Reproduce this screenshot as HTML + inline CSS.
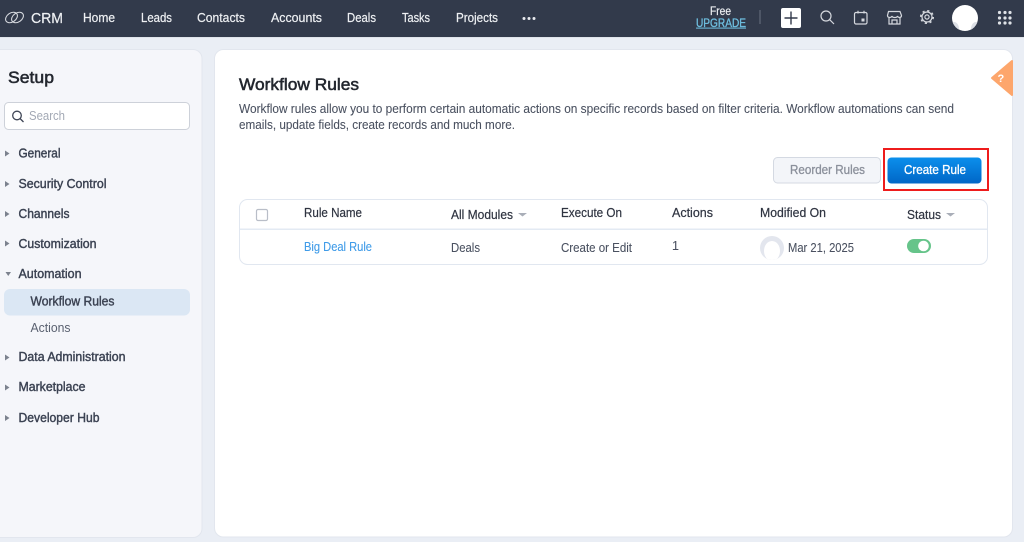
<!DOCTYPE html>
<html lang="en"><head><meta charset="utf-8"><title>Workflow Rules</title>
<style>
html,body{margin:0;padding:0;background:#eaeef5;width:1024px;height:542px;overflow:hidden}
svg{display:block;filter:blur(.3px)}
text{font-family:"Liberation Sans",sans-serif;font-size:12.5px;fill:#3f4656}
.n{fill:#eef0f3;stroke:#eef0f3;stroke-width:.2}
.s{fill:#3b4252;stroke:#3b4252;stroke-width:.4}
.h{fill:#2f3441;stroke:#2f3441;stroke-width:.2}
.d{fill:#4a5160;stroke:#4a5160;stroke-width:.08}
.i{fill:none;stroke:#d5d8de;stroke-width:1.2}
</style></head><body>
<svg width="1024" height="542" viewBox="0 0 1024 542" xmlns="http://www.w3.org/2000/svg">
<defs><linearGradient id="g" x1="0" y1="0" x2="0" y2="1"><stop offset="0" stop-color="#0b8fec"/><stop offset="1" stop-color="#0066c6"/></linearGradient>
<clipPath id="av"><circle cx="965" cy="18" r="13"/></clipPath>
<clipPath id="av2"><circle cx="772" cy="248" r="12"/></clipPath></defs>
<rect width="1024" height="542" fill="#eaeef5"/>
<rect width="1024" height="37" fill="#323a4b"/>
<rect y="37" width="1024" height="1" fill="#dfe3ea"/>

<!-- logo -->
<g fill="none" stroke="#d5d8de" stroke-width="1.1"><ellipse cx="11.500" cy="17.500" rx="6.500" ry="4.500" transform="rotate(-35 11.500 17.500)"/><ellipse cx="17.500" cy="17.500" rx="6.500" ry="4.500" transform="rotate(-35 17.500 17.500)"/></g>
<text x="31" y="23" style="font-size:14.500px" class="n" textLength="32" lengthAdjust="spacingAndGlyphs">CRM</text>
<text x="83" y="22" class="n" textLength="32" lengthAdjust="spacingAndGlyphs">Home</text>
<text x="141" y="22" class="n" textLength="31" lengthAdjust="spacingAndGlyphs">Leads</text>
<text x="197" y="22" class="n" textLength="48" lengthAdjust="spacingAndGlyphs">Contacts</text>
<text x="271" y="22" class="n" textLength="51" lengthAdjust="spacingAndGlyphs">Accounts</text>
<text x="347" y="22" class="n" textLength="29" lengthAdjust="spacingAndGlyphs">Deals</text>
<text x="402" y="22" class="n" textLength="28" lengthAdjust="spacingAndGlyphs">Tasks</text>
<text x="456" y="22" class="n" textLength="42" lengthAdjust="spacingAndGlyphs">Projects</text>
<g fill="#e9ebef"><circle cx="524" cy="18.500" r="1.500"/><circle cx="529" cy="18.500" r="1.500"/><circle cx="534" cy="18.500" r="1.500"/></g>

<!-- right header -->
<text x="710" y="15" style="font-size:11.500px" class="n" textLength="21" lengthAdjust="spacingAndGlyphs">Free</text>
<text x="696" y="27" style="font-size:12px;fill:#6fc0e2;stroke:#6fc0e2;stroke-width:.3" textLength="50" lengthAdjust="spacingAndGlyphs">UPGRADE</text>
<rect x="696" y="27.600" width="50" height="1" fill="#6fc0e2"/>
<rect x="759.500" y="10" width="1" height="14" fill="#6b7280"/>
<rect x="781" y="8" width="20" height="20" rx="2" fill="#fff"/>
<path d="M791 11.500V24.500M784.500 18H797.500" stroke="#323a4b" stroke-width="1.400" fill="none"/>
<circle cx="826" cy="16" r="5" class="i"/><path d="M829.700 19.700L834 24" class="i"/>
<rect x="854.500" y="12.500" width="12.500" height="11.500" rx="1.500" class="i"/><path d="M858 10.800V13.500M864 10.800V13.500" class="i"/><rect x="861.500" y="18.500" width="3" height="3" fill="#d5d8de"/>
<path d="M888.500 11.500H900L901.500 15.500C901.500 18 898 18 897.500 16C897 18 892.500 18 892 16C891.500 18 887.500 18 887.500 15.500ZM889 18V24H900V18M892 24V20H897V24" class="i"/>
<circle cx="927" cy="17" r="5" class="i"/><circle cx="927" cy="17" r="6.300" fill="none" stroke="#d5d8de" stroke-width="1.500" stroke-dasharray="2.200 2.750"/><circle cx="927" cy="17" r="2.100" class="i"/>
<circle cx="965" cy="18" r="13" fill="#fff"/>
<g clip-path="url(#av)" fill="#dde0e6"><ellipse cx="954" cy="29" rx="5" ry="7"/><ellipse cx="976" cy="29" rx="5" ry="7"/></g>
<g fill="#dfe2e7"><circle cx="999.500" cy="12.500" r="1.600"/><circle cx="1005" cy="12.500" r="1.600"/><circle cx="1010" cy="12.500" r="1.600"/><circle cx="999.500" cy="18" r="1.600"/><circle cx="1005" cy="18" r="1.600"/><circle cx="1010" cy="18" r="1.600"/><circle cx="999.500" cy="23" r="1.600"/><circle cx="1005" cy="23" r="1.600"/><circle cx="1010" cy="23" r="1.600"/></g>

<!-- sidebar -->
<rect x="-12" y="49.500" width="214" height="488" rx="9" fill="#f5f6fa" stroke="#e2e6ee"/>
<text x="8" y="83" style="font-size:17px;fill:#23272f;stroke:#23272f;stroke-width:.55" textLength="46" lengthAdjust="spacingAndGlyphs">Setup</text>
<rect x="4.500" y="102.500" width="185" height="27" rx="4" fill="#fff" stroke="#cdd1d9"/>
<circle cx="17" cy="115.500" r="4.300" fill="none" stroke="#3f4656" stroke-width="1.300"/><path d="M20 118.500L23.500 122" stroke="#3f4656" stroke-width="1.300"/>
<text x="29" y="120" style="fill:#a3a9b5" textLength="36" lengthAdjust="spacingAndGlyphs">Search</text>
<g fill="#7c828e">
<path d="M5 150.500L9.500 153.500L5 156.500Z"/><path d="M5 181L9.500 184L5 187Z"/><path d="M5 211L9.500 214L5 217Z"/><path d="M5 240.500L9.500 243.500L5 246.500Z"/>
<path d="M5.500 272H11L8.250 276Z"/><path d="M5 354.500L9.500 357.500L5 360.500Z"/><path d="M5 384.500L9.500 387.500L5 390.500Z"/><path d="M5 415L9.500 418L5 421Z"/>
</g>
<text x="18.500" y="157.500" class="s" textLength="42" lengthAdjust="spacingAndGlyphs">General</text>
<text x="18.500" y="188" class="s" textLength="88" lengthAdjust="spacingAndGlyphs">Security Control</text>
<text x="18.500" y="218" class="s" textLength="51" lengthAdjust="spacingAndGlyphs">Channels</text>
<text x="18.500" y="248" class="s" textLength="78" lengthAdjust="spacingAndGlyphs">Customization</text>
<text x="18.500" y="278" class="s" textLength="63" lengthAdjust="spacingAndGlyphs">Automation</text>
<rect x="4" y="289" width="186" height="26.500" rx="6" fill="#dbe7f4"/>
<text x="30.500" y="305.500" class="s" textLength="84" lengthAdjust="spacingAndGlyphs">Workflow Rules</text>
<text x="30.500" y="332" style="fill:#5a6170" textLength="40" lengthAdjust="spacingAndGlyphs">Actions</text>
<text x="18.500" y="361" class="s" textLength="107" lengthAdjust="spacingAndGlyphs">Data Administration</text>
<text x="18.500" y="391" class="s" textLength="67" lengthAdjust="spacingAndGlyphs">Marketplace</text>
<text x="18.500" y="422" class="s" textLength="81" lengthAdjust="spacingAndGlyphs">Developer Hub</text>

<!-- main -->
<rect x="214.500" y="49.500" width="798" height="487.500" rx="9" fill="#fff" stroke="#e2e6ee"/>
<path d="M1012 61L992 78L1012 95Z" fill="#fda66c" stroke="#fda66c" stroke-width="2" stroke-linejoin="round"/>
<text x="997.500" y="82" style="font-size:11px;fill:#fff;font-weight:bold">?</text>
<text x="239" y="90" style="font-size:17px;fill:#23272f;stroke:#23272f;stroke-width:.55" textLength="120" lengthAdjust="spacingAndGlyphs">Workflow Rules</text>
<text x="239" y="113" class="d" textLength="715" lengthAdjust="spacingAndGlyphs">Workflow rules allow you to perform certain automatic actions on specific records based on filter criteria. Workflow automations can send</text>
<text x="239" y="129" class="d" textLength="276" lengthAdjust="spacingAndGlyphs">emails, update fields, create records and much more.</text>

<rect x="773.500" y="157.500" width="107" height="25.500" rx="4" fill="#f3f5f9" stroke="#d4d9e2"/>
<text x="790" y="174" style="fill:#8b909b;stroke:#8b909b;stroke-width:.3" textLength="75" lengthAdjust="spacingAndGlyphs">Reorder Rules</text>
<rect x="887.500" y="157.500" width="94" height="26" rx="4" fill="url(#g)"/>
<text x="904" y="174" style="fill:#fff;stroke:#fff;stroke-width:.3" textLength="62" lengthAdjust="spacingAndGlyphs">Create Rule</text>
<rect x="884" y="149" width="104" height="41" fill="none" stroke="#ee1c1c" stroke-width="2"/>

<!-- table -->
<rect x="239.500" y="199.500" width="748" height="65" rx="8" fill="#fff" stroke="#e1e7f0"/>
<rect x="240" y="228.500" width="747" height="1.500" fill="#e3eaf3"/>
<rect x="256.500" y="209.500" width="11" height="11" rx="1.500" fill="#fff" stroke="#b9bec8" stroke-width="1.200"/>
<text x="304" y="217" class="h" textLength="58" lengthAdjust="spacingAndGlyphs">Rule Name</text>
<text x="451" y="219" class="h" textLength="62" lengthAdjust="spacingAndGlyphs">All Modules</text>
<path d="M518 213H527L522.500 216.500Z" fill="#a9aeb8"/>
<text x="561" y="217" class="h" textLength="61" lengthAdjust="spacingAndGlyphs">Execute On</text>
<text x="672" y="217" class="h" textLength="41" lengthAdjust="spacingAndGlyphs">Actions</text>
<text x="760" y="217" class="h" textLength="66" lengthAdjust="spacingAndGlyphs">Modified On</text>
<text x="907" y="219" class="h" textLength="34" lengthAdjust="spacingAndGlyphs">Status</text>
<path d="M946 213H955L950.500 216.500Z" fill="#a9aeb8"/>
<text x="304" y="251" style="fill:#3f9be8;stroke:#3f9be8;stroke-width:.1" textLength="68" lengthAdjust="spacingAndGlyphs">Big Deal Rule</text>
<text x="451" y="252" class="d" textLength="29" lengthAdjust="spacingAndGlyphs">Deals</text>
<text x="561" y="252" class="d" textLength="71" lengthAdjust="spacingAndGlyphs">Create or Edit</text>
<text x="672" y="250" class="d">1</text>
<circle cx="772" cy="248" r="12" fill="#e3e6ee"/>
<g clip-path="url(#av2)"><ellipse cx="772" cy="251" rx="8" ry="10" fill="#fff"/></g>
<text x="788" y="252" class="d" textLength="66" lengthAdjust="spacingAndGlyphs">Mar 21, 2025</text>
<rect x="907" y="239" width="24" height="14" rx="7" fill="#66c48a"/>
<circle cx="923.500" cy="246" r="5.300" fill="#fff"/>
</svg>
</body></html>
